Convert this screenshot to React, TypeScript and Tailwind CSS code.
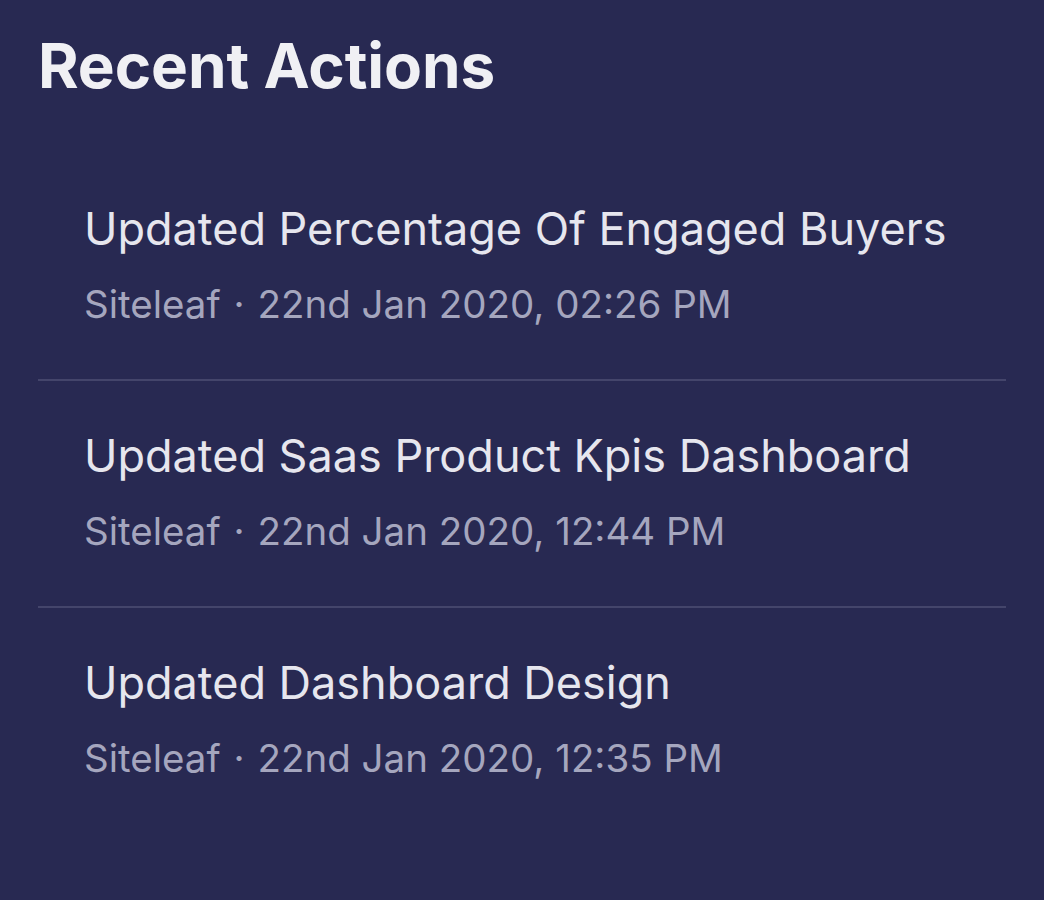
import React from "react";

const items = [
  { title: "Updated Percentage Of Engaged Buyers", time: "22nd Jan 2020, 02:26 PM" },
  { title: "Updated Saas Product Kpis Dashboard", time: "22nd Jan 2020, 12:44 PM" },
  { title: "Updated Dashboard Design", time: "22nd Jan 2020, 12:35 PM" },
];

export default function App() {
  return (
    <div
      className="w-[1044px] h-[900px] bg-[#282952] overflow-hidden px-[38px] pt-[30px]"
      style={{ fontFamily: "Inter, 'Noto Sans', sans-serif" }}
    >
      <h1 className="text-[62px] leading-[72px] font-bold text-[#f0f0f4] tracking-[-0.1px]">Recent Actions</h1>
      <ul className="mt-[52px]">
        {items.map((it, i) => (
          <li
            key={i}
            className={`pl-[46px] pt-[47px] h-[227px] ${i < items.length - 1 ? "border-b-2 border-[#44456b]" : ""}`}
          >
            <div className="text-[45px] leading-[56px] text-[#e6e6ee]">{it.title}</div>
            <div className="mt-[24px] text-[38.5px] leading-[46px] text-[#a5a6be]">
              Siteleaf <span className="mx-[2px]">·</span> {it.time}
            </div>
          </li>
        ))}
      </ul>
    </div>
  );
}
